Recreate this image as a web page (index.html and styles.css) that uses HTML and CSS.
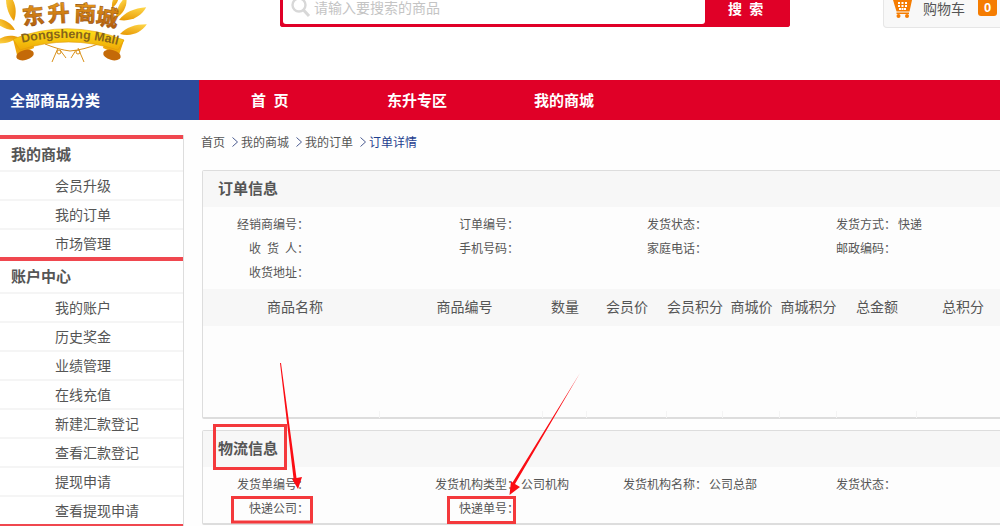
FILE: index.html
```html
<!DOCTYPE html>
<html lang="zh-CN">
<head>
<meta charset="utf-8">
<title>订单详情</title>
<link rel="stylesheet" href="styles.css">
</head>
<body>
<div class="page">
  <header class="header">
    <div class="logo">
      <svg width="150" height="70" viewBox="0 0 150 70">
        <defs>
          <linearGradient id="gold" x1="0" y1="0" x2="0" y2="1"><stop offset="0" stop-color="#ffd84a"/><stop offset="1" stop-color="#e89a06"/></linearGradient>
          <linearGradient id="band" x1="0" y1="0" x2="0" y2="1"><stop offset="0" stop-color="#ffe21c"/><stop offset="1" stop-color="#eea805"/></linearGradient>
          <linearGradient id="hanzi" x1="0" y1="0" x2="0" y2="1"><stop offset="0" stop-color="#f4a81c"/><stop offset="1" stop-color="#a8500c"/></linearGradient>
          <path id="leaf" d="M0 0C5-8 14-13 26-15C22-6 13 1 0 0Z"/>
          <path id="arc" d="M21 43Q68 32 118 45"/>
        </defs>
        <g fill="url(#gold)">
          <use href="#leaf" transform="translate(14 21) rotate(-75)"/>
          <use href="#leaf" transform="translate(15 30) rotate(-125) scale(.85)"/>
          <use href="#leaf" transform="translate(18 37) rotate(-165) scale(.8)"/>
          <use href="#leaf" transform="translate(116 18) rotate(-35) scale(.8)"/>
          <use href="#leaf" transform="translate(119 20) rotate(5) scale(1)"/>
          <use href="#leaf" transform="translate(120 34) rotate(10) scale(.95)"/>
          <use href="#leaf" transform="translate(112 8) rotate(-40) scale(.6)"/>
        </g>
        <g fill="none" stroke="#d99018" stroke-width="1">
          <path d="M45 44C55 48 62 50 70 51C80 50 88 48 98 44"/>
          <path d="M58 48L52 62M60 50L66 58M78 48L84 62M76 50L71 58"/>
        </g>
        <circle cx="59" cy="52" r="2" fill="none" stroke="#d99018"/>
        <circle cx="78" cy="52" r="2" fill="none" stroke="#d99018"/>
        <path d="M13 39L17 55L34 48L32 36Z" fill="#f0a80a"/>
        <path d="M124 40L119 55L103 48L106 36Z" fill="#f0a80a"/>
        <ellipse cx="25" cy="55" rx="9" ry="5" fill="#c46a08" transform="rotate(-15 25 55)"/>
        <ellipse cx="112" cy="55" rx="9" ry="5" fill="#c46a08" transform="rotate(15 112 55)"/>
        <path d="M13 39Q68 18 124 40L118 50Q68 34 20 50Z" fill="url(#band)" stroke="#e09a08" stroke-width=".6"/>
        <text class="logo-en"><textPath href="#arc" startOffset="1">Dongsheng Mall</textPath></text>
        <text class="logo-cn" fill="url(#hanzi)" x="23 48 74 95" y="25 22 21 24" rotate="-6 -3 2 8">东升商城</text>
      </svg>
    </div>
    <form class="search">
      <div class="search-field">
        <svg class="search-icon" width="20" height="20" viewBox="0 0 20 20"><circle cx="8" cy="7" r="6.5" fill="none" stroke="#d8d8d8" stroke-width="2.4"/><path d="M12.5 12L18 18" stroke="#d8d8d8" stroke-width="3"/></svg>
        <span class="search-hint">请输入要搜索的商品</span>
      </div>
      <div class="search-btn">搜 索</div>
    </form>
    <div class="cart">
      <svg width="19" height="18" viewBox="0 0 19 18"><path d="M0 0H19L16.500 11.500H3.500Z" fill="#f57c00"/><path d="M3.500 12.500H16V14H3.500Z" fill="#f57c00"/><circle cx="5.500" cy="16" r="2" fill="#f57c00"/><circle cx="14" cy="16" r="2" fill="#f57c00"/><g fill="#fff"><rect x="5" y="2" width="2" height="2"/><rect x="8.500" y="2" width="2" height="2"/><rect x="12" y="2" width="2" height="2"/><rect x="5" y="5" width="2" height="2"/><rect x="8.500" y="5" width="2" height="2"/><rect x="12" y="5" width="2" height="2"/><rect x="6" y="8" width="2" height="2"/><rect x="8.500" y="8" width="2" height="2"/><rect x="11" y="8" width="2" height="2"/></g></svg>
      <span class="cart-label">购物车</span>
      <span class="cart-badge">0</span>
    </div>
  </header>

  <nav class="nav">
    <div class="nav-all">全部商品分类</div>
    <div class="nav-links">
      <a class="nav-link nav-home">首 页</a>
      <a class="nav-link">东升专区</a>
      <a class="nav-link">我的商城</a>
    </div>
  </nav>

  <div class="content">
    <aside class="sidebar">
      <section class="side-group">
        <h3 class="side-title">我的商城</h3>
        <a class="side-item">会员升级</a>
        <a class="side-item">我的订单</a>
        <a class="side-item">市场管理</a>
      </section>
      <section class="side-group">
        <h3 class="side-title">账户中心</h3>
        <a class="side-item">我的账户</a>
        <a class="side-item">历史奖金</a>
        <a class="side-item">业绩管理</a>
        <a class="side-item">在线充值</a>
        <a class="side-item">新建汇款登记</a>
        <a class="side-item">查看汇款登记</a>
        <a class="side-item">提现申请</a>
        <a class="side-item">查看提现申请</a>
      </section>
    </aside>

    <main class="main">
      <div class="crumbs">
        <span>首页</span>
        <svg class="chev" width="6" height="10" viewBox="0 0 6 10"><path d="M.5 .5L5.500 5L.5 9.500" fill="none" stroke="#4a5a90"/></svg>
        <span>我的商城</span>
        <svg class="chev" width="6" height="10" viewBox="0 0 6 10"><path d="M.5 .5L5.500 5L.5 9.500" fill="none" stroke="#4a5a90"/></svg>
        <span>我的订单</span>
        <svg class="chev" width="6" height="10" viewBox="0 0 6 10"><path d="M.5 .5L5.500 5L.5 9.500" fill="none" stroke="#4a5a90"/></svg>
        <span class="crumb-now">订单详情</span>
      </div>

      <section class="panel panel-order">
        <h2 class="panel-title">订单信息</h2>
        <div class="info">
          <span class="label">经销商编号：</span><span class="value"></span>
          <span class="label">订单编号：</span><span class="value"></span>
          <span class="label">发货状态：</span><span class="value"></span>
          <span class="label">发货方式：</span><span class="value">快递</span>
          <span class="label wide">收 货 人：</span><span class="value"></span>
          <span class="label">手机号码：</span><span class="value"></span>
          <span class="label">家庭电话：</span><span class="value"></span>
          <span class="label">邮政编码：</span><span class="value"></span>
          <span class="label">收货地址：</span><span class="value"></span>
        </div>
        <div class="thead">
          <span class="th-name">商品名称</span>
          <span class="th-code">商品编号</span>
          <span>数量</span>
          <span>会员价</span>
          <span>会员积分</span>
          <span>商城价</span>
          <span>商城积分</span>
          <span>总金额</span>
          <span>总积分</span>
        </div>
        <div class="tbody"></div>
        <div class="tfoot">
          <i></i><i></i><i></i><i></i><i></i><i></i><i></i><i></i><i></i>
        </div>
      </section>

      <section class="panel panel-ship">
        <h2 class="panel-title">物流信息</h2>
        <div class="info">
          <span class="label">发货单编号：</span><span class="value"></span>
          <span class="label">发货机构类型：</span><span class="value">公司机构</span>
          <span class="label">发货机构名称：</span><span class="value">公司总部</span>
          <span class="label">发货状态：</span><span class="value"></span>
          <span class="label">快递公司：</span><span class="value"></span>
          <span class="label">快递单号：</span><span class="value"></span>
        </div>
      </section>
    </main>
  </div>

  <svg class="marks" width="1000" height="526" viewBox="0 0 1000 526">
    <g fill="none" stroke="#f4393c" stroke-width="3">
      <rect x="214.500" y="425.500" width="71" height="43"/>
      <rect x="232.500" y="497.500" width="79" height="24.500"/>
      <rect x="448.500" y="497.500" width="66" height="25"/>
    </g>
    <g fill="#fb0d14">
      <path d="M280 363L281 363L296.500 478L302 477L298 489L292 479L293.500 478.500Z"/>
      <path d="M580 373L515 484L520 487L509.500 495L511 481L512.500 482.500Z"/>
    </g>
  </svg>
</div>
</body>
</html>
```
FILE: styles.css
```css
* {
  box-sizing: border-box;
}

html,
body {
  margin: 0;
  height: 526px;
  overflow: hidden;
  background: #fff;
}

body {
  font-family: "Noto Sans CJK SC", "Liberation Sans", sans-serif;
  color: #555;
  font-size: 12px;
}

.page {
  position: relative;
  width: 1000px;
  height: 526px;
  overflow: hidden;
}

/* header */
.header {
  display: flex;
  align-items: flex-start;
  height: 80px;
}

.logo {
  width: 280px;
  height: 70px;
  flex: none;
}

.logo-en {
  font: bold 12.500px "Liberation Sans", sans-serif;
  fill: #86641a;
}

.logo-cn {
  font: 900 22px "Noto Sans CJK SC", sans-serif;
  stroke: #8a4a08;
  stroke-width: .4;
}

.search {
  display: flex;
  width: 510px;
  height: 27px;
  flex: none;
  background: #e00027;
  border: 3px solid #e00027;
  border-top: 0;
  border-radius: 0 0 3px 3px;
}

.search-field {
  display: flex;
  width: 422px;
  flex: none;
  align-items: flex-start;
  padding-left: 8px;
  background: #fff;
  border-radius: 0 0 3px 3px;
}

.search-icon {
  flex: none;
  margin-top: -2px;
}

.search-hint {
  margin-left: 3px;
  font-size: 14px;
  line-height: 15px;
  color: #c4c4c4;
}

.search-btn {
  flex: 1;
  padding-left: 23px;
  font-size: 14px;
  font-weight: 700;
  line-height: 16px;
  color: #fff;
  word-spacing: 4px;
}

.cart {
  display: flex;
  align-items: flex-start;
  width: 130px;
  height: 28px;
  flex: none;
  margin-left: 93px;
  padding-left: 9px;
  background: #f8f8f8;
  border: 1px solid #e6e6e6;
  border-top: 0;
  border-radius: 0 0 0 4px;
}

.cart-label {
  margin-left: 11px;
  font-size: 14px;
  line-height: 16px;
}

.cart-badge {
  width: 19px;
  height: 16px;
  margin-left: 13px;
  font-family: "Liberation Sans", sans-serif;
  font-size: 13px;
  font-weight: 700;
  line-height: 16px;
  text-align: center;
  color: #fff;
  background: #f57c00;
  border-radius: 0 0 3px 3px;
}

/* nav */
.nav {
  display: flex;
  height: 40px;
  background: #e00027;
  color: #fff;
  font-size: 15px;
  font-weight: 700;
  line-height: 40px;
}

.nav-all {
  width: 199px;
  flex: none;
  padding-left: 10px;
  background: #2e4c9b;
}

.nav-links {
  display: flex;
  gap: 87px;
  padding-left: 52px;
}

.nav-home {
  min-width: 49px;
  word-spacing: 4px;
}

/* body */
.content {
  display: flex;
  height: 406px;
  background: #fefefe;
}

.sidebar {
  width: 184px;
  flex: none;
  margin-top: 15px;
  border-right: 1px solid #ddd;
  background: #fff;
}

.side-group {
  border-top: 4px solid #f0474f;
}

.side-group:last-child {
  border-bottom: 4px solid #f0474f;
}

.side-title {
  height: 31px;
  margin: 0;
  padding-left: 11px;
  font-size: 15px;
  font-weight: 700;
  line-height: 30px;
  color: #555;
}

.side-item {
  display: block;
  height: 29px;
  padding-left: 55px;
  font-size: 14px;
  line-height: 26px;
  border-top: 2px solid #f5f5f5;
}

.main {
  width: 828px;
  flex: none;
  padding-left: 18px;
}

.crumbs {
  display: flex;
  align-items: center;
  height: 50px;
  margin-left: -1px;
  padding-bottom: 6px;
  gap: 3px;
  line-height: 20px;
}

.chev {
  flex: none;
  margin-left: 4px;
  margin-right: 0;
}

.crumb-now {
  color: #1e3f8f;
}

/* panels */
.panel {
  width: 810px;
  background: #fdfdfd;
  border: 1px solid #ddd;
  border-width: 1px 1px 2px;
  border-radius: 2px;
}

.panel-order {
  height: 249px;
  margin-bottom: 11px;
}

.panel-ship {
  height: 95px;
}

.panel-title {
  height: 36px;
  margin: 0;
  padding-left: 15px;
  font-size: 15px;
  font-weight: 700;
  line-height: 34px;
  background: #f7f7f7;
}

.info {
  display: grid;
  grid-template-columns: 106px 110px 100px 88px 100px 90px 99px auto;
  grid-auto-rows: 24px;
  padding-top: 5px;
  line-height: 24px;
}

.panel-order .info {
  height: 82px;
}

.label {
  text-align: right;
  white-space: nowrap;
}

.wide {
  word-spacing: 3.300px;
}

.value {
  padding-left: 2px;
  white-space: nowrap;
}

.thead,
.tfoot {
  display: grid;
  grid-template-columns: 177px 163px 44px 80px 56px 57px 57px 80px 92px;
}

.thead {
  height: 37px;
  font-size: 14px;
  line-height: 35px;
  text-align: center;
  background: #f7f7f7;
}

.th-name {
  padding-left: 7px;
}

.th-code {
  padding-left: 6px;
}

.tbody {
  height: 85px;
}

.tfoot {
  height: 7px;
}

.tfoot i {
  border-right: 1px solid #f4f4f4;
}

/* annotations drawn over the screenshot */
.marks {
  position: absolute;
  top: 0;
  left: 0;
  pointer-events: none;
}
```
